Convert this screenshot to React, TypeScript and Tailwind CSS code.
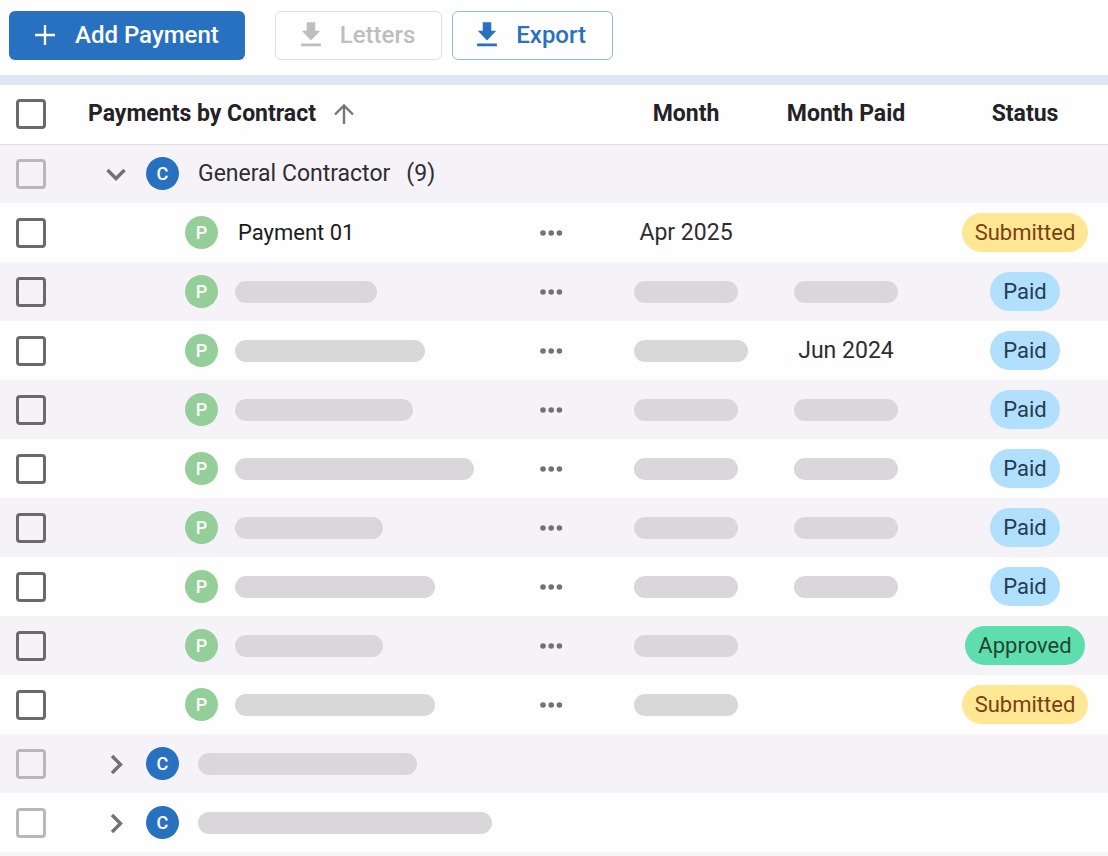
import React, { useState } from "react";

type Status = "Submitted" | "Paid" | "Approved";

interface Payment {
  name?: string;
  nameBar?: string;
  month?: string;
  monthBar?: string;
  paid?: string;
  paidBar?: string;
  status: Status;
}

const payments: Payment[] = [
  { name: "Payment 01", month: "Apr 2025", status: "Submitted" },
  { nameBar: "w-[142px]", monthBar: "w-[104px]", paidBar: "w-[104px]", status: "Paid" },
  { nameBar: "w-[190px]", monthBar: "w-[114px]", paid: "Jun 2024", status: "Paid" },
  { nameBar: "w-[178px]", monthBar: "w-[104px]", paidBar: "w-[104px]", status: "Paid" },
  { nameBar: "w-[239px]", monthBar: "w-[104px]", paidBar: "w-[104px]", status: "Paid" },
  { nameBar: "w-[148px]", monthBar: "w-[104px]", paidBar: "w-[104px]", status: "Paid" },
  { nameBar: "w-[200px]", monthBar: "w-[104px]", paidBar: "w-[104px]", status: "Paid" },
  { nameBar: "w-[148px]", monthBar: "w-[104px]", status: "Approved" },
  { nameBar: "w-[200px]", monthBar: "w-[104px]", status: "Submitted" },
];

const statusStyles: Record<Status, string> = {
  Submitted: "bg-[#ffe793] text-[#7a3e12]",
  Paid: "bg-[#b1e0ff] text-[#263b52]",
  Approved: "bg-[#5edeae] text-[#23452f]",
};

function DownloadIcon() {
  return (
    <svg className="size-[34px]" viewBox="0 0 24 24" fill="currentColor" aria-hidden="true">
      <path d="M5 20h14v-2H5v2zM18.5 9H15V3H9v6H5.5l6.5 6.8L18.5 9z" />
    </svg>
  );
}

function Chevron({ open }: { open: boolean }) {
  return (
    <svg
      className="size-6"
      viewBox="0 0 24 24"
      fill="none"
      stroke="currentColor"
      strokeWidth="3.4"
      aria-hidden="true"
    >
      <path d={open ? "M3.5 8l8.5 8.5L20.5 8" : "M8 4l8.5 8.5L8 21"} />
    </svg>
  );
}

function Checkbox({ label, disabled = false }: { label: string; disabled?: boolean }) {
  return (
    <input
      type="checkbox"
      aria-label={label}
      disabled={disabled}
      className="block size-[30px] appearance-none rounded-[4px] border-3 border-[#6b696c] bg-transparent checked:bg-[#2871c1] disabled:border-[#b9b7ba]"
    />
  );
}

function Avatar({ letter, className }: { letter: string; className: string }) {
  return (
    <span
      className={`flex size-[33px] shrink-0 items-center justify-center rounded-full text-lg font-medium text-white ${className}`}
    >
      {letter}
    </span>
  );
}

function Bar({ width }: { width: string }) {
  return <div className={`h-[22px] rounded-full bg-[#d9d7da] ${width}`} />;
}

function Value({ text, bar }: { text?: string; bar?: string }) {
  return (
    <div className="mx-auto w-[104px] whitespace-nowrap text-center">
      {bar ? <Bar width={bar} /> : text}
    </div>
  );
}

const rowClass = "h-[59px] odd:bg-[#f5f3f7] even:bg-[#fefefe]";

function GroupRow({
  open,
  onToggle,
  label,
  children,
}: {
  open: boolean;
  onToggle?: () => void;
  label: string;
  children: React.ReactNode;
}) {
  return (
    <tr className={rowClass}>
      <td className="pl-4">
        <Checkbox label={`Select ${label}`} disabled />
      </td>
      <td colSpan={5}>
        <div className="flex items-center pl-4">
          <button
            type="button"
            aria-label={`Toggle ${label}`}
            aria-expanded={open}
            onClick={onToggle}
            className="text-[#737174]"
          >
            <Chevron open={open} />
          </button>
          <Avatar letter="C" className="ml-[18px] bg-[#2871c1]" />
          <div className="ml-[19px] flex gap-4">{children}</div>
        </div>
      </td>
    </tr>
  );
}

export default function App() {
  const [open, setOpen] = useState(true);

  return (
    <main className="min-h-screen bg-[#fefefe] font-['Roboto',sans-serif] text-[23px] leading-7 text-[#2f2d30]">
      <div className="flex items-center border-b-10 border-[#e0e7f4] px-[9px] pt-[11px] pb-[15px] text-2xl leading-7">
        <button
          type="button"
          className="flex h-[49px] items-center gap-5 rounded-md bg-[#2871c1] px-[26px] pb-px font-medium text-white"
        >
          <svg className="size-5" viewBox="0 0 20 20" fill="none" stroke="currentColor" strokeWidth="2.3" aria-hidden="true">
            <path d="M10 0v20M0 10h20" />
          </svg>
          Add Payment
        </button>
        <button
          type="button"
          disabled
          className="ml-[30px] flex h-[49px] items-center gap-3 rounded-md border border-[#e0dfe3] pr-[26px] pb-px pl-[18px] font-medium text-[#bfbdc0]"
        >
          <DownloadIcon />
          Letters
        </button>
        <button
          type="button"
          className="ml-[10px] flex h-[49px] items-center gap-3 rounded-md border border-[#93b6df] pr-[26px] pb-px pl-[17px] font-medium text-[#2871c1]"
        >
          <DownloadIcon />
          Export
        </button>
      </div>

      <table className="w-full table-fixed border-collapse">
        <colgroup>
          <col className="w-[88px]" />
          <col />
          <col className="w-[86px]" />
          <col className="w-[160px]" />
          <col className="w-[160px]" />
          <col className="w-[182px]" />
        </colgroup>
        <thead>
          <tr className="h-[59px] border-b border-[#e0dfe2] text-[#242226]">
            <th className="pl-4">
              <Checkbox label="Select all payments" />
            </th>
            <th className="text-left font-bold" aria-sort="ascending">
              <div className="flex items-center gap-[18px]">
                Payments by Contract
                <svg className="size-5 text-[#777578]" viewBox="0 0 20 20" fill="none" stroke="currentColor" strokeWidth="2.4" aria-hidden="true">
                  <path d="M10 20V1.5M1 10.5l9-9 9 9" />
                </svg>
              </div>
            </th>
            <th aria-label="Actions" />
            <th className="font-bold">Month</th>
            <th className="font-bold">Month Paid</th>
            <th className="pl-4 font-bold">Status</th>
          </tr>
        </thead>
        <tbody>
          <GroupRow open={open} onToggle={() => setOpen(!open)} label="General Contractor">
            <span>General Contractor</span>
            <span>(9)</span>
          </GroupRow>
          {open &&
            payments.map((p, i) => (
              <tr key={i} className={rowClass}>
                <td className="pl-4">
                  <Checkbox label={`Select payment ${i + 1}`} />
                </td>
                <td>
                  <div className="flex items-center pl-[97px]">
                    <Avatar letter="P" className="bg-[#94ce99]" />
                    {p.nameBar ? (
                      <div className="ml-[17px]">
                        <Bar width={p.nameBar} />
                      </div>
                    ) : (
                      <span className="ml-5 text-[22px] text-[#1c1b1d]">{p.name}</span>
                    )}
                  </div>
                </td>
                <td className="pr-6">
                  <button type="button" aria-label="More actions" className="mx-auto block text-[#737174]">
                    <svg className="size-6" viewBox="0 0 24 24" fill="currentColor" aria-hidden="true">
                      <circle cx="4" cy="12" r="2.8" />
                      <circle cx="12.2" cy="12" r="2.8" />
                      <circle cx="20.4" cy="12" r="2.8" />
                    </svg>
                  </button>
                </td>
                <td>
                  <Value text={p.month} bar={p.monthBar} />
                </td>
                <td>
                  <Value text={p.paid} bar={p.paidBar} />
                </td>
                <td className="pl-4">
                  <div className={`mx-auto flex h-[39px] w-fit items-center rounded-full px-[13px] text-[22px] ${statusStyles[p.status]}`}>
                    {p.status}
                  </div>
                </td>
              </tr>
            ))}
          <GroupRow open={false} label="second contract">
            <Bar width="w-[219px]" />
          </GroupRow>
          <GroupRow open={false} label="third contract">
            <Bar width="w-[294px]" />
          </GroupRow>
        </tbody>
      </table>
      <div className="h-1 bg-[#f5f3f7]" />
    </main>
  );
}
